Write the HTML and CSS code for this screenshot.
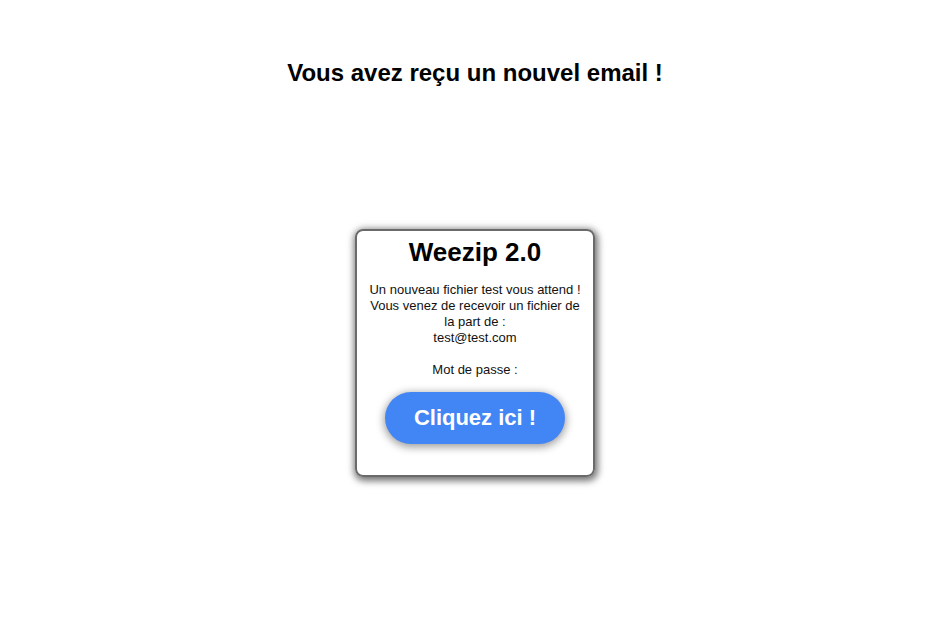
FILE: index.html
```html
<!DOCTYPE html>
<html lang="fr">
<head>
<meta charset="utf-8">
<title>Weezip</title>
<link rel="stylesheet" href="styles.css">
</head>
<body>
<h1 class="headline">Vous avez reçu un nouvel email !</h1>
<main class="stage">
  <section class="card">
    <h2 class="card-title">Weezip 2.0</h2>
    <p class="card-text">Un nouveau fichier test vous attend !<br>Vous venez de recevoir un fichier de la part de :<br>test@test.com<br><br>Mot de passe :</p>
    <a class="cta" href="#">Cliquez ici !</a>
  </section>
</main>
</body>
</html>
```

FILE: styles.css
```css
html, body {
  margin: 0;
  padding: 0;
  background: #fff;
  font-family: "Liberation Sans", Arial, sans-serif;
  color: #000;
}
body {
  min-height: 100vh;
}
.headline {
  margin: 0;
  padding-top: 58px;
  text-align: center;
  font-size: 24px;
  font-weight: bold;
  line-height: 30px;
}
.stage {
  display: flex;
  justify-content: center;
  padding-top: 141px;
  padding-bottom: 40px;
}
.card {
  width: 216px;
  padding: 5px 10px 31px;
  border: 2px solid #6a6a6a;
  border-radius: 8px;
  box-shadow: 1px 2px 7px 2px rgba(0,0,0,0.55);
  text-align: center;
  display: flex;
  flex-direction: column;
  align-items: center;
}
.card-title {
  margin: 0;
  font-size: 26px;
  line-height: 32px;
  font-weight: bold;
}
.card-text {
  margin: 14px 0 0;
  font-size: 13px;
  line-height: 16px;
  color: #111;
}
.cta {
  margin-top: 14px;
  width: 180px;
  height: 52px;
  border-radius: 26px;
  background: #4285f4;
  color: #fff;
  font-size: 22px;
  font-weight: bold;
  text-decoration: none;
  display: flex;
  align-items: center;
  justify-content: center;
  box-shadow: 0 2px 8px 1px rgba(0,0,0,0.4);
}
```
